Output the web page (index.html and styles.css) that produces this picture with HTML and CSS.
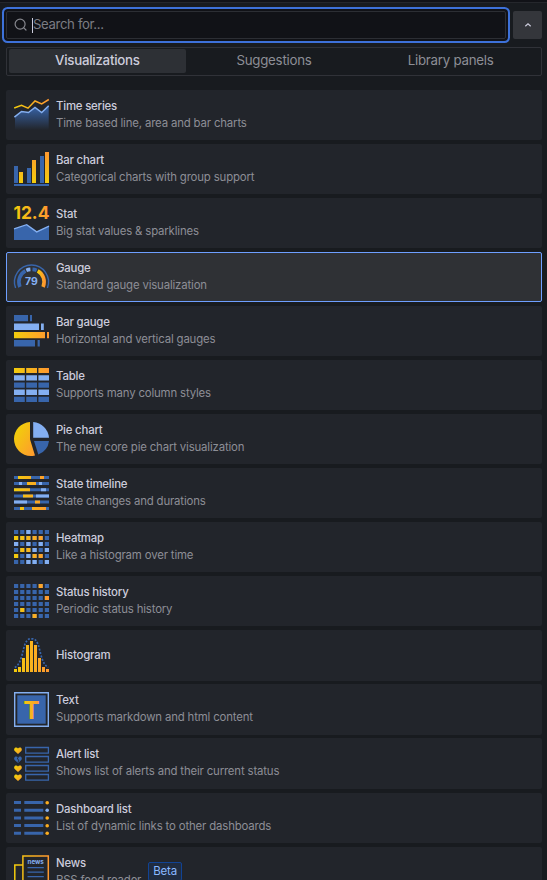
FILE: index.html
```html
<!DOCTYPE html>
<html lang="en">
<head>
<meta charset="utf-8">
<title>Visualizations</title>
<link rel="stylesheet" href="styles.css">
</head>
<body>
<svg class="defs" width="0" height="0" aria-hidden="true">
  <defs>
    <linearGradient id="warm" gradientUnits="userSpaceOnUse" x1="0" y1="0" x2="35" y2="0"><stop offset="0" stop-color="#f2cc0c"/><stop offset="1" stop-color="#ff9830"/></linearGradient>
    <linearGradient id="warmbox"><stop offset="0" stop-color="#f2cc0c"/><stop offset="1" stop-color="#ff9830"/></linearGradient>
    <linearGradient id="rise" gradientUnits="userSpaceOnUse" x1="0" y1="31" x2="0" y2="0"><stop offset="0" stop-color="#f2cc0c"/><stop offset="1" stop-color="#ff9830"/></linearGradient>
    <linearGradient id="diag" x1="0" y1="0" x2="1" y2="1"><stop offset="0.2" stop-color="#f2cc0c"/><stop offset="1" stop-color="#ff9830"/></linearGradient>
    <linearGradient id="fade" x1="0" y1="0" x2="0" y2="1"><stop offset="0" stop-color="#3865ab"/><stop offset="1" stop-color="#3865ab" stop-opacity="0"/></linearGradient>
    <path id="heart" d="M4 7 .7 3.9C-.5 2.5.4.4 2.1.4 3 .4 3.6.8 4 1.5 4.4.8 5 .4 5.9.4 7.6.4 8.5 2.5 7.3 3.9Z"/>
  </defs>
</svg>
<header class="topline"></header>
<main class="picker">
  <div class="search-row">
    <div class="search">
      <svg class="search-icon" viewBox="0 0 14 14"><circle cx="6.1" cy="6.1" r="5" /><path d="m9.8 9.8 2.2 2.2"/></svg>
      <span class="caret"></span><span class="placeholder">Search for...</span>
    </div>
    <button class="collapse" aria-label="Collapse"><svg viewBox="0 0 8 6"><path d="m1.3 4.2 2.7-2.5 2.7 2.5"/></svg></button>
  </div>
  <nav class="tabs">
    <span class="tab active">Visualizations</span><span class="tab">Suggestions</span><span class="tab">Library panels</span>
  </nav>
  <div class="list">
    <article class="card">
      <svg class="icon" viewBox="0 0 35 35"><path fill="url(#fade)" d="M1 19 7.5 13.7 14.5 14.7 21 9.7 27.7 14.7 34.7 8V32H1Z"/><g fill="none" stroke-width="1.5"><path stroke="#84aff1" d="M.4 19.2 7.5 13.5 14.5 14.5 21 9.5 27.7 14.5 34.7 7.8"/><path stroke="url(#warm)" d="M.2 10 7.5 7.4 14 10.2 21 3 27.7 6 34.8 1.5"/></g></svg>
      <div class="info"><h3>Time series</h3><p>Time based line, area and bar charts</p></div>
    </article>
    <article class="card">
      <svg class="icon" viewBox="0 0 35 35"><path fill="#3865ab" d="M0 14h4v17H0zM13 16h4v15h-4zM26 4h4v27h-4zM0 32h35v2H0z"/><path fill="url(#rise)" d="M5 20h4v11H5zM18 8h4v23h-4zM31 0h4v31h-4z"/></svg>
      <div class="info"><h3>Bar chart</h3><p>Categorical charts with group support</p></div>
    </article>
    <article class="card">
      <svg class="icon" viewBox="0 0 35 35"><text class="stat-value" x="-.6" y="12.9" textLength="36" lengthAdjust="spacingAndGlyphs">12.4</text><path fill="#3865ab" d="M0 23 12.7 18.8 22.7 26 35 20.2V34H0Z"/><path fill="none" stroke="#84aff1" stroke-width="1.4" d="M0 22.9 12.7 18.7 22.7 25.9 35 20.1"/></svg>
      <div class="info"><h3>Stat</h3><p>Big stat values &amp; sparklines</p></div>
    </article>
    <article class="card selected">
      <svg class="icon" viewBox="0 0 35 35"><g fill="none"><path stroke="#3865ab" stroke-width="1.4" d="M1.6 28A17 17 0 1 1 33.4 28"/><g stroke-width="3.6"><path stroke="#3865ab" d="M5.9 27A12.7 12.7 0 0 1 11.4 10.9M18.5 9.4A12.7 12.7 0 0 1 22.7 10.4"/><path stroke="#84aff1" d="M12.3 10.4A12.7 12.7 0 0 1 16.4 9.4"/><path stroke="url(#warmbox)" d="M23.7 10.9A12.7 12.7 0 0 1 29.1 27"/></g></g><text class="gauge-value" x="11.1" y="25.2" textLength="12.8" lengthAdjust="spacingAndGlyphs">79</text></svg>
      <div class="info"><h3>Gauge</h3><p>Standard gauge visualization</p></div>
    </article>
    <article class="card">
      <svg class="icon" viewBox="0 0 35 35"><path fill="#3865ab" d="M0 1h14v6.3H0zM16 1h2v6.3h-2zM0 26.1h21v6.4H0zM23.6 26.1h2.2v6.4h-2.2z"/><path fill="#84aff1" d="M0 9.4h25V16H0zM27 9.4h2.8V16H27z"/><path fill="url(#warm)" d="M0 18h31v6.3H0zM33 18h2v6.3h-2z"/></svg>
      <div class="info"><h3>Bar gauge</h3><p>Horizontal and vertical gauges</p></div>
    </article>
    <article class="card">
      <svg class="icon" viewBox="0 0 35 35"><path fill="url(#warm)" d="M0 0h10.8v5H0zM12.2 0H23v5H12.2zM24.4 0H35v5H24.4z"/><path fill="#84aff1" d="M0 7.2h10.8v5.4H0zM12.2 7.2H23v5.4H12.2zM24.4 7.2H35v5.4H24.4zM0 21.6h10.8V27H0zM12.2 21.6H23V27H12.2zM24.4 21.6H35V27H24.4z"/><path fill="#3865ab" d="M0 14.4h10.8v5.4H0zM12.2 14.4H23v5.4H12.2zM24.4 14.4H35v5.4H24.4zM0 28.7h10.8V34H0zM12.2 28.7H23V34H12.2zM24.4 28.7H35V34H24.4z"/></svg>
      <div class="info"><h3>Table</h3><p>Supports many column styles</p></div>
    </article>
    <article class="card">
      <svg class="icon" viewBox="0 0 35 35"><path fill="url(#diag)" d="M16 0V17.3L21 33.4C19.5 33.8 18.2 34 16.8 34A16.9 17 0 0 1 0 17C0 8 7 .6 16 0Z"/><path fill="#84aff1" d="M19.2 0A17 17 0 0 1 35 15.7H19.2Z"/><path fill="#3865ab" d="M20 19H35A17 17 0 0 1 24.3 32.6Z"/></svg>
      <div class="info"><h3>Pie chart</h3><p>The new core pie chart visualization</p></div>
    </article>
    <article class="card">
      <svg class="icon" viewBox="0 0 35 35"><path fill="#3865ab" d="M0 0h35v3H0zM0 6.1h35v3H0zM0 12.2h35v3H0zM0 18.4h35v3H0zM0 24.6h35v3H0zM0 30.9h35v3H0z"/><path fill="#84aff1" d="M5 6.1h3v3H5zM25 6.1h3v3h-3zM27 12.2h5v3h-5zM22 18.4h13v3H22zM0 24.6h13v3H0z"/><path fill="url(#warm)" d="M4 0h13v3H4zM26 0h4v3h-4zM13 6.1h9v3h-9zM0 12.2h16v3H0zM9 18.4h10v3H9zM21 24.6h5v3h-5zM6 30.9h4v3H6zM18 30.9h14v3H18z"/></svg>
      <div class="info"><h3>State timeline</h3><p>State changes and durations</p></div>
    </article>
    <article class="card">
      <svg class="icon" viewBox="0 0 35 35"><g fill="none" stroke-width="4"><path stroke="#3865ab" stroke-dasharray="4.2 1.96" d="M0 2h35M0 8h35M0 14h35M0 20h35M0 26h35M0 32h35"/><path stroke="#84aff1" d="M12.3 2h4.2M0 14h4.2M12.3 14h4.2M24.6 14h4.2M18.5 20h4.2M30.8 20h4.2M12.3 26h4.2M12.3 32h4.2M18.5 32h4.2M30.8 32h4.2"/></g><path fill="url(#warm)" d="M0 6h4.2v4H0zM6.2 6h4.2v4H6.2zM12.3 6h4.2v4h-4.2zM18.5 6h4.2v4h-4.2zM24.6 6h4.2v4h-4.2zM6.2 18h4.2v4H6.2zM12.3 18h4.2v4h-4.2zM0 24h4.2v4H0zM18.5 24h4.2v4h-4.2zM24.6 24h4.2v4h-4.2z"/></svg>
      <div class="info"><h3>Heatmap</h3><p>Like a histogram over time</p></div>
    </article>
    <article class="card">
      <svg class="icon" viewBox="0 0 35 35"><path fill="none" stroke-width="4" stroke="#3865ab" stroke-dasharray="4.2 1.96" d="M0 2h35M0 8h35M0 14h35M0 20h35M0 26h35M0 32h35"/><path fill="url(#warm)" d="M24.6 0h4.2v4h-4.2zM30.8 12H35v4h-4.2zM6.2 24h4.2v4H6.2zM18.5 30h4.2v4h-4.2z"/></svg>
      <div class="info"><h3>Status history</h3><p>Periodic status history</p></div>
    </article>
    <article class="card tall overlap">
      <svg class="icon" viewBox="0 0 35 35"><path fill="url(#warm)" d="M0 31h3v3H0zM4 29h3v5H4zM8 20h3v14H8zM12 7h3v27h-3zM16 3h3v31h-3zM20 7h3v27h-3zM24 20h3v14h-3zM28 29h3v5h-3zM32 31h3v3h-3z"/><path fill="none" stroke="#3865ab" stroke-width="1.7" stroke-dasharray="2 1.5" d="M.8 29.5C8 25.5 8.4 12 11.3 5.5 13.5.8 15 .8 17.5.8S21.5.8 23.7 5.5C26.6 12 27 25.5 34.2 29.5"/></svg>
      <div class="info"><h3>Histogram</h3></div>
    </article>
    <article class="card tall overlap">
      <svg class="icon" viewBox="0 0 35 35"><path fill="none" stroke="#84aff1" stroke-width="1.4" d="M.7.7h33.6v33.6H.7z"/><path fill="#3865ab" d="M3.3 3.3h28.4v28.4H3.3z"/><text class="text-mark" x="17.5" y="26.6">T</text></svg>
      <div class="info"><h3>Text</h3><p>Supports markdown and html content</p></div>
    </article>
    <article class="card tall">
      <svg class="icon" viewBox="0 0 35 35"><g fill="url(#diag)"><use href="#heart" y="1"/><use href="#heart" y="19"/><use href="#heart" y="28"/></g><use href="#heart" y="10" fill="#3865ab"/><path fill="none" stroke="#22252b" stroke-width=".8" d="m4.3 11-1 2 1.6 1-1 2.5"/><path fill="none" stroke="#3865ab" stroke-width="1.3" d="M11.7 1.5h22.7v5.7H11.7zM11.7 10.5h22.7v5.7H11.7zM11.7 19.5h22.7v5.7H11.7zM11.7 28.5h22.7v5.7H11.7z"/></svg>
      <div class="info"><h3>Alert list</h3><p>Shows list of alerts and their current status</p></div>
    </article>
    <article class="card">
      <svg class="icon" viewBox="0 0 35 35"><path fill="#3865ab" d="M0 0h7v3H0zM10.3 0h19v3h-19zM0 7.7h7v3H0zM10.3 7.7h19v3h-19zM0 15.4h7v3H0zM10.3 15.4h19v3h-19zM0 23.1h7v3H0zM10.3 23.1h19v3h-19zM0 30.8h7v3H0zM10.3 30.8h19v3h-19z"/><g fill="#fbad20"><circle cx="33.2" cy="1.7" r="1.8"/><circle cx="33.2" cy="17" r="1.8"/><circle cx="33.2" cy="24.7" r="1.8"/><circle cx="33.2" cy="32.3" r="1.8"/></g><circle cx="33.2" cy="9.3" r="1.8" fill="#84aff1"/></svg>
      <div class="info"><h3>Dashboard list</h3><p>List of dynamic links to other dashboards</p></div>
    </article>
    <article class="card">
      <svg class="icon" viewBox="0 0 35 35"><path fill="none" stroke="url(#warm)" stroke-width="1.5" d="M8.9 34V.9h25.4V34H.8V10h8.1"/><path fill="none" stroke="#3865ab" stroke-width="1.2" d="M13.5 12.7h16.3M13.5 17.2h16.3M13.5 21.7h16.3M13.5 26.2h16.3"/><text class="news-mark" x="13.6" y="8.9" textLength="16.2" lengthAdjust="spacingAndGlyphs">news</text></svg>
      <div class="info"><h3>News</h3><p>RSS feed reader</p></div>
      <span class="badge">Beta</span>
    </article>
  </div>
</main>
</body>
</html>
```
FILE: styles.css
```css
* { box-sizing: border-box; }
html, body { height: 880px; overflow: hidden; }
body { margin: 0; background: #181b1f; color: #ccccdc; font-family: Inter, "Liberation Sans", sans-serif; }
.defs { display: block; height: 0; }
.topline { height: 3px; background: #111217; border-bottom: 1px solid #25272c; }
.picker { padding: 8px 5px 0 6px; }
.search-row { display: flex; gap: 7px; height: 28px; }
.search { display: flex; align-items: center; width: 500px; padding-left: 7px; background: #111217; border: 1px solid #2c2e34; border-radius: 2px; box-shadow: 0 0 0 2px #111217, 0 0 0 4px #3d71d9; }
.search-icon { width: 14px; height: 14px; fill: none; stroke: #86878e; stroke-width: 1.2; stroke-linecap: round; }
.caret { width: 1px; height: 15px; margin-left: 4px; background: #ccccdc; }
.placeholder { font-size: 13.2px; line-height: 18px; margin-top: -2px; color: #7b7c83; letter-spacing: -0.37px; }
.collapse { display: grid; place-items: center; width: 29px; height: 28px; padding: 0; border: 0; border-radius: 2px; background: #34363b; }
.collapse svg { width: 8px; height: 6px; fill: none; stroke: #ccccdc; stroke-width: 1.2; }
.tabs { display: grid; grid-template-columns: repeat(3, 1fr); height: 29px; margin-top: 8px; padding: 1px 2px; border: 1px solid #303238; border-radius: 2px; }
.tab { height: 24px; line-height: 23px; font-size: 13.3px; letter-spacing: -0.25px; text-align: center; color: #8d8e96; border-radius: 2px; }
.tab.active { color: #ccccdc; background: #2d3035; font-weight: 500; }
.list { display: flex; flex-direction: column; gap: 4px; margin-top: 14px; }
.card { display: flex; flex: none; align-items: flex-start; height: 50px; padding: 8px; border-radius: 2px; background: #22252b; }
.card.tall { height: 51px; }
.card.overlap { margin-bottom: -1px; }
.card.selected { padding: 7px; background: #2f3135; border: 1px solid #6e9fff; }
.icon { width: 35px; height: 35px; flex: none; overflow: visible; }
.info { align-self: center; margin: 0 0 1px 7px; white-space: nowrap; }
.info h3 { margin: 0; font-size: 11.4px; letter-spacing: -0.2px; line-height: 17px; font-weight: 500; }
.info p { margin: 0; font-size: 11.4px; letter-spacing: -0.16px; line-height: 17px; color: #8d8e96; }
.badge { align-self: flex-start; height: 19px; margin: 7px 0 0 7px; padding: 0 4px; border: 1px solid #114394; border-radius: 2px; background: #202c40; color: #8ab8ff; font-size: 11.5px; letter-spacing: -0.2px; line-height: 17px; }
.stat-value { font-size: 17.8px; font-weight: 700; fill: url(#warm); }
.gauge-value { font-size: 10px; font-weight: 700; fill: #84aff1; }
.text-mark { font-size: 24.5px; font-weight: 700; fill: url(#warmbox); text-anchor: middle; }
.news-mark { font-size: 6px; font-weight: 700; fill: #84aff1; }
```
